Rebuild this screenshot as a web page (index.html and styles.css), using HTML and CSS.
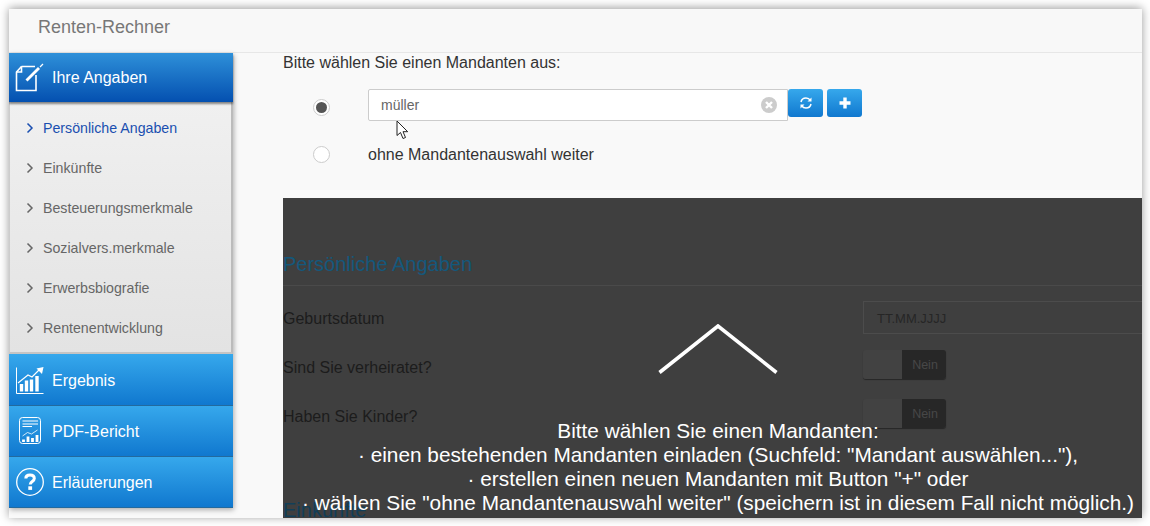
FILE: index.html
```html
<!DOCTYPE html>
<html lang="de">
<head>
<meta charset="utf-8">
<title>Renten-Rechner</title>
<link rel="stylesheet" href="styles.css">
</head>
<body>
<div class="app">
  <header class="topbar">Renten-Rechner</header>
  <div class="layout">
    <nav class="sidebar">
      <a class="nav-head active">
        <svg class="nav-icon" viewBox="0 0 30 30" width="30" height="30" fill="none" stroke="#fff" stroke-width="1.600"><path d="M7.500 3.500H21M7.500 3.500L2.500 9V27.500H22V12"/><path d="M2.500 9H7.500V3.500"/><path d="M12.500 17.500L25 5" stroke-width="2.800"/><path d="M26 4L29 1" stroke-width="1.300"/></svg>
        <span>Ihre Angaben</span>
      </a>
      <ul class="subnav">
        <li class="current"><svg class="chev" viewBox="0 0 8 12" width="8" height="12"><path d="M1.500 1.500L6 6L1.500 10.500"/></svg>Persönliche Angaben</li>
        <li><svg class="chev" viewBox="0 0 8 12" width="8" height="12"><path d="M1.500 1.500L6 6L1.500 10.500"/></svg>Einkünfte</li>
        <li><svg class="chev" viewBox="0 0 8 12" width="8" height="12"><path d="M1.500 1.500L6 6L1.500 10.500"/></svg>Besteuerungsmerkmale</li>
        <li><svg class="chev" viewBox="0 0 8 12" width="8" height="12"><path d="M1.500 1.500L6 6L1.500 10.500"/></svg>Sozialvers.merkmale</li>
        <li><svg class="chev" viewBox="0 0 8 12" width="8" height="12"><path d="M1.500 1.500L6 6L1.500 10.500"/></svg>Erwerbsbiografie</li>
        <li><svg class="chev" viewBox="0 0 8 12" width="8" height="12"><path d="M1.500 1.500L6 6L1.500 10.500"/></svg>Rentenentwicklung</li>
      </ul>
      <a class="nav-head tall">
        <svg class="nav-icon" viewBox="0 0 30 30" width="30" height="30" fill="none" stroke="#fff"><path d="M2.500 2.500V28.500H29.500" stroke-width="1"/><path d="M4 18L14 10L18 12L25 5" stroke-width="1.200"/><path d="M22.500 3.500L29.500 2L28 9Z" fill="#fff" stroke="none"/><path d="M7.500 26.500V19M12.500 26.500V15.500M17.500 26.500V14.500M23 26.500V11" stroke-width="3.400"/></svg>
        <span>Ergebnis</span>
      </a>
      <a class="nav-head">
        <svg class="nav-icon" viewBox="0 0 30 30" width="30" height="30" fill="none" stroke="#fff"><rect x="5.500" y="1.500" width="21" height="26" rx="3" stroke-width="1"/><path d="M8.500 5H24M8.500 8H24M8.500 10.500H18" stroke-width="1"/><path d="M8.500 20L13.500 16.500L17.500 18L23.500 14" stroke-width=".8"/><path d="M9.500 26V23.500M14 26V20.500M18.500 26V22M23 26V19" stroke-width="2.800"/></svg>
        <span>PDF-Bericht</span>
      </a>
      <a class="nav-head">
        <svg class="nav-icon" viewBox="0 0 30 30" width="30" height="30" fill="none"><circle cx="16" cy="15" r="13.300" stroke="#fff" stroke-width="1.300"/><path d="M11.800 11.500C11.800 9 13.800 8 16 8C18.500 8 20.300 9.300 20.300 11.500C20.300 14.500 16.200 14.500 16.200 17.500" stroke="#fff" stroke-width="3"/><rect x="14.300" y="19.300" width="3.800" height="3.600" fill="#fff"/></svg>
        <span>Erläuterungen</span>
      </a>
    </nav>
    <main class="content">
      <section class="picker">
        <p class="picker-title">Bitte wählen Sie einen Mandanten aus:</p>
        <div class="picker-row first">
          <span class="radio checked"></span>
          <div class="search">
            <span>müller</span>
            <svg class="clear" viewBox="0 0 16 16" width="16" height="16"><circle cx="8" cy="8" r="8" fill="#ccc"/><path d="M5 5L11 11M11 5L5 11" stroke="#fff" stroke-width="2.400"/></svg>
            <svg class="pointer" viewBox="0 0 14 20" width="14" height="20"><path d="M1 1V15.500L4.500 12.500L7 18.500L9.500 17.500L7 11.700H11.700Z" fill="#fff" stroke="#222" stroke-width="1"/></svg>
          </div>
          <button class="btn" type="button"><svg viewBox="0 0 14 14" width="14" height="14" fill="none" stroke="#fff" stroke-width="1.500"><path d="M2 6C2.500 3.500 4.500 2 7 2C9 2 10.500 3 11.200 4.200"/><path d="M12 8C11.500 10.500 9.500 12 7 12C5 12 3.500 11 2.800 9.800"/><path d="M12.500 1.500V5.500H8.500Z" fill="#fff" stroke="none"/><path d="M1.500 12.500V8.500H5.500Z" fill="#fff" stroke="none"/></svg></button>
          <button class="btn" type="button"><svg viewBox="0 0 14 14" width="14" height="14"><path d="M7 1.500V12.500M1.500 7H12.500" stroke="#fff" stroke-width="3.400"/></svg></button>
        </div>
        <div class="picker-row second">
          <span class="radio"></span>
          <span class="picker-label">ohne Mandantenauswahl weiter</span>
        </div>
      </section>
      <section class="dimmed">
        <h3 class="section-title">Persönliche Angaben</h3>
        <div class="field first-field">
          <span>Geburtsdatum</span>
          <div class="date-input">TT.MM.JJJJ</div>
        </div>
        <div class="field">
          <span>Sind Sie verheiratet?</span>
          <div class="toggle"><i></i><b>Nein</b></div>
        </div>
        <div class="field">
          <span>Haben Sie Kinder?</span>
          <div class="toggle"><i></i><b>Nein</b></div>
        </div>
        <h3 class="section-title second-title">Einkünfte</h3>
        <div class="hint">
          <svg class="hint-arrow" viewBox="0 0 120 50" width="120" height="50" fill="none"><path d="M1.500 48.500L60 2L118.500 48.500" stroke="#fff" stroke-width="3.600"/></svg>
          <p>Bitte wählen Sie einen Mandanten:<br>· einen bestehenden Mandanten einladen (Suchfeld: "Mandant auswählen..."),<br>· erstellen einen neuen Mandanten mit Button "+" oder<br>· wählen Sie "ohne Mandantenauswahl weiter" (speichern ist in diesem Fall nicht möglich.)</p>
        </div>
      </section>
    </main>
  </div>
</div>
</body>
</html>
```
FILE: styles.css
```css
* { box-sizing: border-box; }
html, body { height: 100%; }
body {
  margin: 0;
  padding: 9px 8px 8px 9px;
  background: #fff;
  font-family: "Liberation Sans", Arial, sans-serif;
  overflow: hidden;
}
.app {
  height: 509px;
  background: #f9f9f9;
  box-shadow: 0 -1px 9px rgba(0, 0, 0, .4);
  display: flex;
  flex-direction: column;
  overflow: hidden;
}
.topbar {
  height: 44px;
  flex: none;
  padding: 8px 0 0 29px;
  background: #f8f8f8;
  border-bottom: 1px solid #e7e7e7;
  color: #777;
  font-size: 18px;
  line-height: 20px;
}
.layout { flex: 1; display: flex; min-height: 0; }
.sidebar {
  width: 224px;
  flex: none;
  display: flex;
  flex-direction: column;
  height: 455px;
  box-shadow: 1px 2px 5px rgba(0, 0, 0, .3);
}
.nav-head {
  height: 51px;
  flex: none;
  display: flex;
  align-items: center;
  padding-left: 5px;
  gap: 8px;
  color: #fff;
  font-size: 16px;
  background: linear-gradient(#36a8ec, #1078cf);
  border-bottom: 1px solid #236a9e;
}
.nav-head > span { padding-top: 2px; }
.nav-head.tall { height: 52px; }
.nav-head.active {
  height: 49px;
  background: linear-gradient(#2e90d9, #0450b0);
  border-bottom: 0;
  box-shadow: 0 2px 2px rgba(0, 0, 0, .45);
  position: relative;
}
.nav-head.active > span { padding-top: 0; }
.nav-icon { flex: none; }
.subnav {
  list-style: none;
  margin: 0;
  padding: 6px 0 4px;
  height: 252px;
  flex: none;
  background: linear-gradient(#f0f0f0, #e3e3e3);
  border-left: 1px solid #ccc;
  border-right: 2px solid #bbb;
  border-bottom: 2px solid #c4c4c4;
  color: #666;
  font-size: 14.2px;
}
.subnav li {
  height: 40px;
  display: flex;
  align-items: center;
  gap: 9px;
  padding-left: 16px;
}
.subnav li.current { color: #1a4fb0; }
.chev { flex: none; fill: none; stroke: #666; stroke-width: 1.500; }
.current .chev { stroke: #1a4fb0; }
.content {
  flex: 1;
  min-width: 0;
  margin-left: 50px;
  display: flex;
  flex-direction: column;
}
.picker { height: 145px; flex: none; color: #333; font-size: 16px; }
.picker-title { margin: 0; line-height: 20px; padding-top: 0; }
.picker-row { display: flex; align-items: flex-start; }
.picker-row.first { margin-top: 16px; }
.picker-row.second { margin-top: 24px; align-items: center; }
.picker-label { padding-top: 1px; }
.radio {
  width: 17px;
  height: 17px;
  flex: none;
  margin: 10px 38px 0 30px;
  border: 1px solid #ccc;
  border-radius: 50%;
  background: #fff;
  position: relative;
}
.second .radio { margin-top: 0; }
.radio.checked::after {
  content: "";
  position: absolute;
  inset: 2px;
  border-radius: 50%;
  background: #555;
}
.search {
  width: 420px;
  height: 32px;
  flex: none;
  display: flex;
  align-items: center;
  justify-content: space-between;
  padding: 0 10px 0 12px;
  background: #fff;
  border: 1px solid #ccc;
  border-radius: 2px 0 0 2px;
  color: #666;
  font-size: 14px;
  position: relative;
}
.pointer { position: absolute; left: 27px; top: 30px; }
.btn {
  width: 35px;
  height: 28px;
  flex: none;
  padding: 0;
  border: 0;
  border-radius: 3px;
  background: linear-gradient(#36a8ec, #1078cf);
  display: flex;
  align-items: center;
  justify-content: center;
}
.btn + .btn { margin-left: 4px; }
.dimmed {
  flex: 1;
  position: relative;
  overflow: hidden;
  background: #3f3f3f;
  color: #1c1c1c;
  font-size: 16px;
}
.section-title {
  margin: 0;
  padding-top: 54px;
  height: 88px;
  border-bottom: 1px solid #4a4a4a;
  color: #14587c;
  font-size: 20px;
  font-weight: 400;
  line-height: 24px;
}
.second-title { height: auto; padding-top: 70px; border: 0; color: #123f58; }
.field { display: flex; justify-content: space-between; height: 29px; margin-top: 20px; }
.field > span { padding-top: 8px; line-height: 20px; }
.first-field { height: 33px; margin: 15px -11px 16px 0; }
.first-field + .field { margin-top: 0; }
.date-input {
  width: 290px;
  height: 33px;
  padding: 0 13px;
  border: 1px solid #4c4c4c;
  color: #262626;
  font-size: 13px;
  line-height: 33px;
}
.toggle {
  width: 83px;
  height: 29px;
  margin-right: 196px;
  display: flex;
  border-radius: 3px;
  overflow: hidden;
  box-shadow: 0 1px 1px rgba(0, 0, 0, .4);
}
.toggle i { width: 39px; background: #424242; }
.toggle b {
  flex: 1;
  padding-left: 2px;
  background: #272727;
  color: #474747;
  font-size: 12.5px;
  font-weight: 400;
  line-height: 30px;
  text-align: center;
}
.hint {
  position: absolute;
  inset: 0;
  padding: 126px 0 0 11px;
  display: flex;
  flex-direction: column;
  align-items: center;
  color: #fff;
  text-align: center;
  font-size: 20.8px;
  line-height: 24px;
}
.hint p { margin: 45px 0 0; white-space: nowrap; }
.hint-arrow { flex: none; }
```
